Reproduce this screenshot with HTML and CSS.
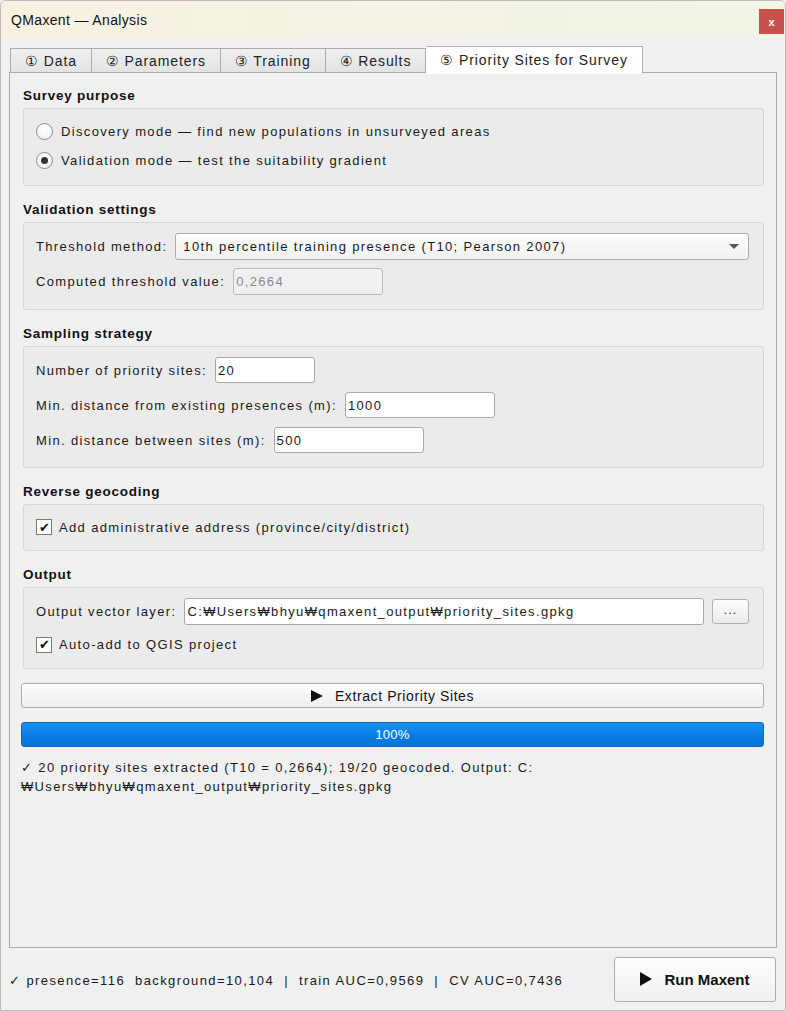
FILE: index.html
```html
<!DOCTYPE html>
<html lang="en">
<head>
<meta charset="utf-8">
<title>QMaxent — Analysis</title>
<link rel="stylesheet" href="styles.css">
</head>
<body>
<div class="window">
  <header class="titlebar">
    <span class="title">QMaxent — Analysis</span>
    <button class="close" aria-label="Close">x</button>
  </header>

  <div class="content">
    <nav class="tabs">
      <div class="tab">① Data</div>
      <div class="tab">② Parameters</div>
      <div class="tab">③ Training</div>
      <div class="tab">④ Results</div>
      <div class="tab active">⑤ Priority Sites for Survey</div>
    </nav>

    <section class="panel">
      <h3 class="group-title">Survey purpose</h3>
      <div class="group radios">
        <label class="row"><span class="radio"></span>Discovery mode — find new populations in unsurveyed areas</label>
        <label class="row"><span class="radio checked"></span>Validation mode — test the suitability gradient</label>
      </div>

      <h3 class="group-title">Validation settings</h3>
      <div class="group fields">
        <div class="row">
          <span class="label">Threshold method:</span>
          <div class="combo">
            <span>10th percentile training presence (T10; Pearson 2007)</span>
            <span class="arrow"></span>
          </div>
        </div>
        <div class="row">
          <span class="label">Computed threshold value:</span>
          <div class="input disabled w150">0,2664</div>
        </div>
      </div>

      <h3 class="group-title">Sampling strategy</h3>
      <div class="group fields sampling">
        <div class="row">
          <span class="label">Number of priority sites:</span>
          <div class="input w100">20</div>
        </div>
        <div class="row">
          <span class="label">Min. distance from existing presences (m):</span>
          <div class="input w150">1000</div>
        </div>
        <div class="row">
          <span class="label">Min. distance between sites (m):</span>
          <div class="input w150">500</div>
        </div>
      </div>

      <h3 class="group-title">Reverse geocoding</h3>
      <div class="group checks">
        <label class="row"><span class="checkbox">✔</span>Add administrative address (province/city/district)</label>
      </div>

      <h3 class="group-title">Output</h3>
      <div class="group fields output">
        <div class="row">
          <span class="label">Output vector layer:</span>
          <div class="input grow">C:₩Users₩bhyu₩qmaxent_output₩priority_sites.gpkg</div>
          <button class="browse">...</button>
        </div>
        <label class="row check-row"><span class="checkbox">✔</span>Auto-add to QGIS project</label>
      </div>

      <button class="wide-button"><span class="play"></span>Extract Priority Sites</button>

      <div class="progress"><span>100%</span></div>

      <p class="status">✓ 20 priority sites extracted (T10 = 0,2664); 19/20 geocoded. Output: C:<br>₩Users₩bhyu₩qmaxent_output₩priority_sites.gpkg</p>
    </section>

    <footer class="bottom">
      <span class="summary">✓ presence=116&nbsp;&nbsp;background=10,104&nbsp;&nbsp;|&nbsp;&nbsp;train AUC=0,9569&nbsp;&nbsp;|&nbsp;&nbsp;CV AUC=0,7436</span>
      <button class="run"><span class="play big"></span>Run Maxent</button>
    </footer>
  </div>
</div>
</body>
</html>
```

FILE: styles.css
```css
* {
  box-sizing: border-box;
}

html, body {
  margin: 0;
  padding: 0;
  background: #f0f0f0;
}

body {
  font-family: "Liberation Sans", Arial, sans-serif;
  font-size: 13px;
  color: #1a1a1a;
  letter-spacing: 1.35px;
}

.window {
  width: 786px;
  height: 1011px;
  border: 1px solid #bdbdbd;
  border-radius: 6px 6px 0 0;
  overflow: hidden;
  display: flex;
  flex-direction: column;
  background: #f0f0f0;
}

/* window caption */
.titlebar {
  height: 37px;
  flex: none;
  display: flex;
  align-items: center;
  justify-content: space-between;
  padding: 0 1px 0 10px;
  background: linear-gradient(90deg, #f8f1e2 0%, #f4f3e5 50%, #f2f4e6 100%);
}

.title {
  font-size: 14px;
  letter-spacing: 0.35px;
  color: #111;
}

.close {
  width: 25px;
  height: 25px;
  border: none;
  background: #c8514e;
  color: #fff;
  font: bold 11px "Liberation Sans", Arial, sans-serif;
  padding: 0;
  margin-top: 4px;
}

.content {
  flex: 1;
  display: flex;
  flex-direction: column;
  padding: 8px 8px 0 8px;
}

/* tab strip */
.tabs {
  display: flex;
  align-items: flex-end;
  height: 27px;
  padding-left: 1px;
  position: relative;
  z-index: 1;
  margin-bottom: -1px;
}

.tab {
  height: 25px;
  padding: 0 14px;
  display: flex;
  align-items: center;
  font-size: 14px;
  letter-spacing: 0.9px;
  color: #222;
  border: 1px solid #acacac;
  border-left-width: 0;
  background: linear-gradient(#f0f0f0, #e3e3e3);
}

.tab:first-child {
  border-left-width: 1px;
}

.tab.active {
  height: 28px;
  padding: 0 14px 1px;
  background: #fff;
  border-bottom-color: #fff;
  margin-bottom: -1px;
  border-radius: 1px 1px 0 0;
}

.panel {
  height: 876px;
  flex: none;
  width: 768px;
  border: 1px solid #acacac;
  background: #f0f0f0;
  padding: 14px 12px 0 11px;
  display: flex;
  flex-direction: column;
}

.group-title {
  margin: 0 0 3px 2px;
  font-size: 13.5px;
  line-height: 18px;
  font-weight: bold;
  letter-spacing: 0.75px;
  color: #111;
}

.group {
  margin: 0 0 15px 2px;
  background: #ebebeb;
  border: 1px solid #d6d6d6;
  border-radius: 3px;
  padding: 11px 14px 14px 12px;
  display: flex;
  flex-direction: column;
}

.row {
  display: flex;
  align-items: center;
  gap: 8px;
}

.radios {
  gap: 7px;
}

.radios .row {
  height: 22px;
  gap: 8px;
}

.radio {
  width: 17px;
  height: 17px;
  border-radius: 50%;
  border: 1px solid #8c8c8c;
  background: radial-gradient(circle at 50% 35%, #ffffff 0%, #f4f4f4 70%, #e6e6e6 100%);
  display: flex;
  align-items: center;
  justify-content: center;
}

.radio.checked::after {
  content: "";
  width: 7px;
  height: 7px;
  border-radius: 50%;
  background: #333;
}

.fields {
  padding-top: 10px;
  gap: 8px;
}

.sampling {
  gap: 9px;
}

.label {
  white-space: nowrap;
}

.combo {
  flex: 1;
  height: 27px;
  border: 1px solid #acacac;
  border-radius: 3px;
  background: linear-gradient(#fdfdfd, #f1f1f1);
  display: flex;
  align-items: center;
  justify-content: space-between;
  padding: 0 9px 0 7px;
}

.arrow {
  width: 0;
  height: 0;
  border-left: 5px solid transparent;
  border-right: 5px solid transparent;
  border-top: 5px solid #555;
}

.input {
  height: 26px;
  border: 1px solid #a9a9a9;
  border-radius: 3px;
  background: #fff;
  display: flex;
  align-items: center;
  padding: 0 2px;
  white-space: nowrap;
  overflow: hidden;
}

.input.disabled {
  background: #f0f0f0;
  border-color: #bcbcbc;
  color: #8a8a8a;
  height: 27px;
}

.w100 { width: 100px; }
.w150 { width: 150px; }
.grow { flex: 1; height: 27px; }

.browse {
  width: 37px;
  height: 25px;
  border: 1px solid #b2b2b2;
  border-radius: 3px;
  background: linear-gradient(#fbfbfb, #ececec);
  font: 13px "Liberation Sans", Arial, sans-serif;
  color: #333;
  padding: 0 0 4px;
  letter-spacing: 1px;
}

.checks {
  padding-top: 12px;
  padding-bottom: 13px;
}

.checkbox {
  width: 16px;
  height: 16px;
  border: 1px solid #7a7a7a;
  background: #fff;
  display: flex;
  align-items: center;
  justify-content: center;
  font-size: 13px;
  letter-spacing: 0;
  line-height: 1;
  color: #111;
  margin: 0 -1px 0 0;
}

.checks .row {
  height: 20px;
}

.output {
  padding-bottom: 14px;
  gap: 10px;
}

.check-row {
  height: 19px;
}

/* actions */
.wide-button {
  height: 25px;
  margin: -1px 0 14px 0;
  border: 1px solid #adadad;
  border-radius: 3px;
  background: linear-gradient(#fdfdfd, #ededed);
  font: 14px "Liberation Sans", Arial, sans-serif;
  letter-spacing: 0.6px;
  color: #111;
  display: flex;
  align-items: center;
  justify-content: center;
  gap: 12px;
}

.play {
  width: 0;
  height: 0;
  border-top: 6px solid transparent;
  border-bottom: 6px solid transparent;
  border-left: 12px solid #111;
}

.progress {
  height: 25px;
  border: 1px solid #1a63b5;
  border-radius: 3px;
  background: linear-gradient(#1792f3, #0a7ee6 50%, #0572d8);
  display: flex;
  align-items: center;
  justify-content: center;
  color: #fff;
  font-size: 13px;
  letter-spacing: 0.3px;
}

.status {
  margin: 11px 0 0 0;
  line-height: 19px;
  font-size: 13px;
  letter-spacing: 1.35px;
}

.bottom {
  flex: 1;
  display: flex;
  align-items: center;
  justify-content: space-between;
  padding: 1px 0 1px 0;
}

.summary {
  font-size: 13px;
  letter-spacing: 1.4px;
  white-space: nowrap;
  padding-top: 3px;
}

.run {
  width: 162px;
  height: 45px;
  border: 1px solid #adadad;
  border-radius: 3px;
  background: linear-gradient(#fdfdfd, #f0f0f0);
  font: bold 15px "Liberation Sans", Arial, sans-serif;
  letter-spacing: 0;
  color: #111;
  display: flex;
  align-items: center;
  justify-content: center;
  gap: 12px;
  margin-right: 1px;
}

.play.big {
  border-top-width: 7px;
  border-bottom-width: 7px;
  border-left-width: 12px;
}
```
